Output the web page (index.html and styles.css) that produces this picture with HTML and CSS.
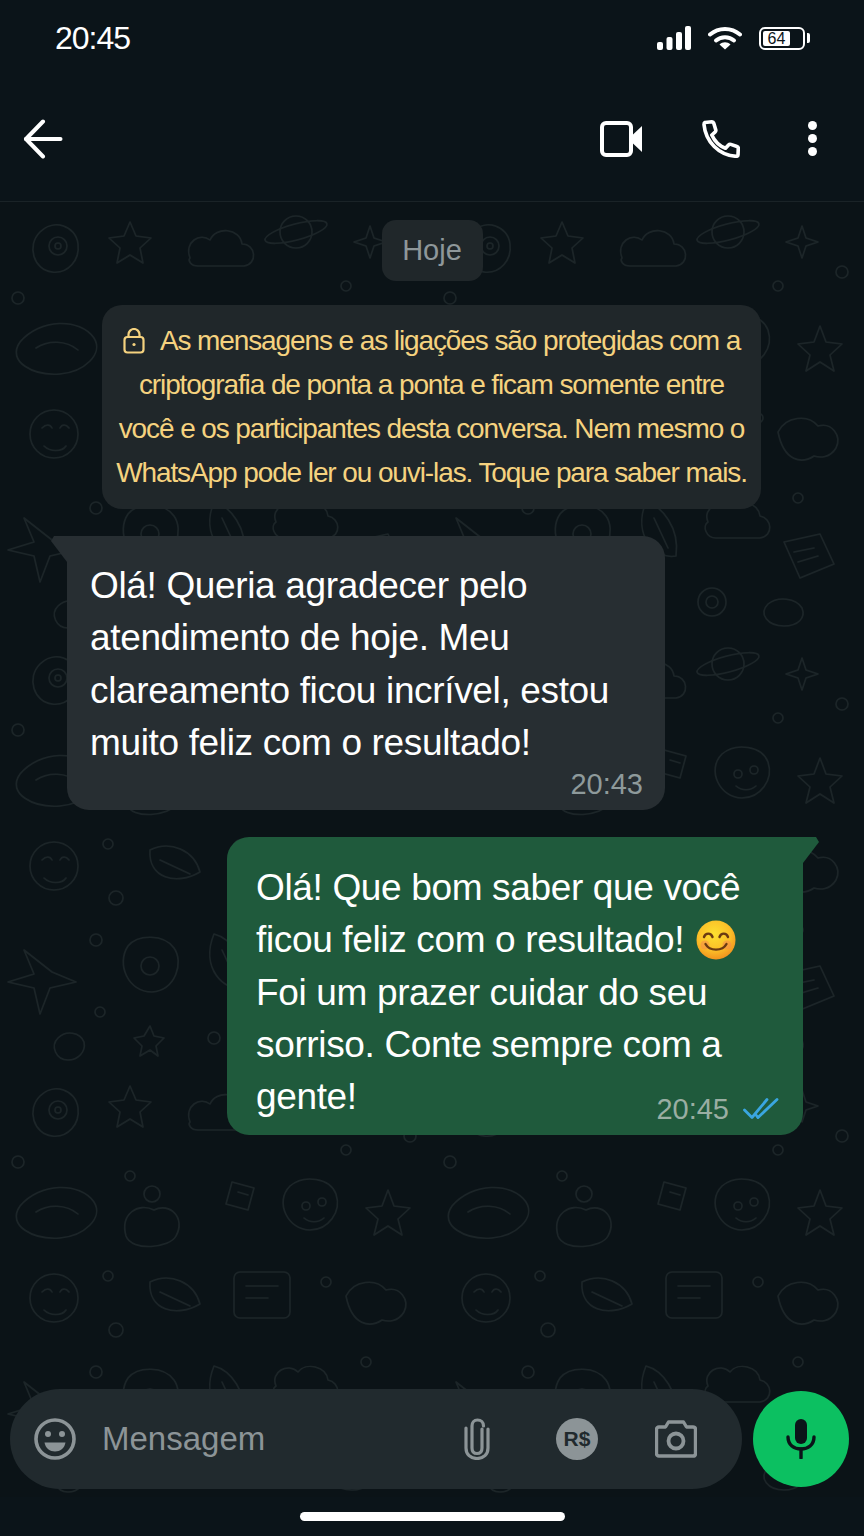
FILE: index.html

```html
<!DOCTYPE html>
<html lang="pt-BR">
<head>
    <meta charset="UTF-8">
    <meta name="viewport" content="width=device-width, initial-scale=1.0">
    <title>Conversa</title>
    <link rel="stylesheet" href="styles.css">
</head>
<body>
    <div class="phone">
        <div class="statusbar">
            <span class="clock">20:45</span>
            <div class="status-icons">
                <svg class="ico-signal" viewBox="0 0 34 24" width="34" height="24">
                    <rect x="0" y="16" width="6" height="8" rx="2" fill="#fff"/>
                    <rect x="9.5" y="11" width="6" height="13" rx="2" fill="#fff"/>
                    <rect x="19" y="6" width="6" height="18" rx="2" fill="#fff"/>
                    <rect x="28" y="0" width="6" height="24" rx="2" fill="#fff"/>
                </svg>
                <svg class="ico-wifi" viewBox="0 0 34 24" width="34" height="24" fill="none" stroke="#fff" stroke-width="4" stroke-linecap="round">
                    <path d="M2 8.5C10.500 1 23.500 1 32 8.500"/>
                    <path d="M8 14.500C13 10 21 10 26 14.500"/>
                    <path d="M17 23.500 L11.500 18.500C14.500 15.500 19.500 15.500 22.500 18.500Z" fill="#fff" stroke="none"/>
                </svg>
                <div class="battery">
                    <div class="battery-body"><span class="battery-level">64</span></div>
                    <div class="battery-cap"></div>
                </div>
            </div>
        </div>

        <div class="toolbar">
            <svg viewBox="0 0 40 40" width="40" height="40" fill="none" stroke="#fff" stroke-width="4" stroke-linecap="round" stroke-linejoin="round">
                <path d="M20 2.500L3 20L20 37.500"/>
                <path d="M3 20H37.500"/>
            </svg>
            <div class="toolbar-actions">
                <svg class="ico-video" viewBox="0 0 42 36" width="42" height="36">
                    <rect x="2" y="2" width="29" height="32" rx="4" fill="none" stroke="#fff" stroke-width="4"/>
                    <path d="M33 13.500L42 5V31L33 22.500Z" fill="#fff"/>
                </svg>
                <svg class="ico-phone" viewBox="0 0 38 38" width="38" height="38" fill="none" stroke="#fff" stroke-width="3.600" stroke-linejoin="round">
                    <path d="M3 2.500L10 1.800C11 1.800 11.500 2.300 11.700 3L13.800 10C14 11 13.800 11.500 13 12.200L9.800 15C12.500 21 17.500 26 23.500 28.300L26.500 25C27.200 24.300 27.800 24.100 28.800 24.400L35 26.500C36 26.800 36.300 27.300 36.300 28.300L36 35C36 36 35.300 36.300 34.300 36.300C17 35.500 3.500 21.500 2 4.500C2 3.300 2.300 2.800 3 2.500Z"/>
                </svg>
                <div class="dots"><i></i><i></i><i></i></div>
            </div>
        </div>

        <div class="chat">
            <!-- doodle wallpaper, tiled behind the messages -->
            <svg class="wallpaper" width="864" height="1296">
                <defs>
                    <pattern id="doodles" width="432" height="432" patternUnits="userSpaceOnUse">
                        <g fill="none" stroke="#1c2528" stroke-width="1.600" stroke-linecap="round" stroke-linejoin="round">
                            <path d="M40 30c14-14 36-6 38 12 2 16-10 30-26 28-18-2-26-26-12-40z"/>
                            <circle cx="58" cy="44" r="9"/><circle cx="58" cy="44" r="3"/>
                            <path d="M130 20l6 14 15 2-11 10 3 15-13-8-13 8 3-15-11-10 15-2z"/>
                            <path d="M190 56c-6-16 10-26 20-18 6-14 30-12 32 4 14 0 16 20 2 22h-46c-8 0-10-6-8-8z"/>
                            <circle cx="296" cy="30" r="16"/><ellipse cx="296" cy="30" rx="32" ry="8" transform="rotate(-15 296 30)"/>
                            <path d="M370 24l4 12 12 4-12 4-4 12-4-12-12-4 12-4z"/>
                            <circle cx="410" cy="70" r="6"/><circle cx="346" cy="84" r="5"/><circle cx="18" cy="96" r="6"/>
                            <path d="M20 140c20-24 60-24 74-4 10 16-10 34-34 36-26 2-54-12-40-32z"/>
                            <path d="M36 146c12-8 30-8 42 2"/>
                            <circle cx="130" cy="110" r="5"/><circle cx="152" cy="128" r="8"/>
                            <path d="M126 170c-6-22 12-34 28-26 16-8 32 8 22 26-6 12-44 16-50 0z"/>
                            <path d="M232 116l22 6-6 22-22-6z"/><path d="M238 126l10 3"/>
                            <path d="M290 120c14-12 40-8 46 8 6 18-8 36-26 36-22 0-36-28-20-44z"/>
                            <circle cx="306" cy="140" r="4"/><circle cx="322" cy="136" r="4"/><path d="M304 152c6 5 14 5 20 0"/>
                            <path d="M388 124l6 16 16 2-12 11 4 16-14-9-14 9 4-16-12-11 16-2z"/>
                            <path d="M30 232a24 24 0 1 0 48 0a24 24 0 1 0-48 0z"/><path d="M42 226c4-4 8-4 10 0M60 226c2-4 6-4 9 0M44 244c6 6 18 6 22 0"/>
                            <circle cx="108" cy="210" r="5"/><circle cx="116" cy="264" r="7"/>
                            <path d="M150 216c20-10 44 0 50 22-24 14-52 6-50-22z"/><path d="M160 226l30 14"/>
                            <path d="M240 206h44a6 6 0 0 1 6 6v34a6 6 0 0 1-6 6h-44a6 6 0 0 1-6-6v-34a6 6 0 0 1 6-6zM246 220h32M246 232h22"/>
                            <circle cx="326" cy="216" r="5"/>
                            <path d="M346 230c8-16 30-18 40-6 14-4 24 10 18 22-6 10-16 10-22 8-12 8-30 6-36-24z"/>
                            <path d="M24 316l10 24-26 8 26 6 6 26 10-26 26-6-24-10z"/>
                            <circle cx="96" cy="306" r="6"/><circle cx="100" cy="378" r="5"/>
                            <path d="M128 312c10-12 36-12 46 2 10 14 2 42-22 44-24 0-36-28-24-46z"/><circle cx="150" cy="332" r="9"/>
                            <path d="M214 300c16 4 34 26 30 54-20 4-44-20-30-54z"/><path d="M222 316l14 30"/>
                            <path d="M276 320c-6-14 12-24 22-14 8-10 28-6 30 8 12 2 14 20 0 22h-44c-10 0-14-12-8-16z"/>
                            <circle cx="366" cy="296" r="5"/>
                            <path d="M352 340l36-8 14 30-34 14z"/><path d="M362 350l20-4M366 360l20-6"/>
                            <path d="M58 404c8-8 22-6 26 4 2 10-6 18-16 18-12 0-18-14-10-22z"/>
                            <path d="M150 392l4 10 10 2-8 8 2 10-8-6-10 6 2-10-8-8 10-2z"/>
                            <circle cx="214" cy="404" r="6"/><circle cx="280" cy="400" r="14"/><circle cx="280" cy="400" r="6"/>
                            <path d="M336 402c10-8 28-6 34 4 4 10-4 18-18 18-16 0-26-12-16-22z"/>
                        </g>
                    </pattern>
                </defs>
                <rect width="864" height="1296" fill="url(#doodles)"/>
            </svg>

            <div class="date-chip">Hoje</div>

            <div class="notice">
                <div><svg class="ico-lock" viewBox="0 0 22 26" width="22" height="26" fill="none" stroke="#f5d27f" stroke-width="2.200"><rect x="1.500" y="9" width="19" height="15.500" rx="3"/><path d="M5.500 9V6.500a5.500 5.500 0 0 1 11 0V9"/><circle cx="11" cy="16.500" r="1.600" fill="#f5d27f" stroke="none"/></svg>As mensagens e as ligações são protegidas com a</div>
                <div>criptografia de ponta a ponta e ficam somente entre</div>
                <div>você e os participantes desta conversa. Nem mesmo o</div>
                <div>WhatsApp pode ler ou ouvi-las. Toque para saber mais.</div>
            </div>

            <div class="bubble bubble-in">
                <div class="bubble-text">Olá! Queria agradecer pelo<br>atendimento de hoje. Meu<br>clareamento ficou incrível, estou<br>muito feliz com o resultado!</div>
                <div class="meta"><span>20:43</span></div>
            </div>

            <div class="bubble bubble-out">
                <div class="bubble-text">Olá! Que bom saber que você<br>ficou feliz com o resultado! <svg class="emoji" viewBox="0 0 40 40" width="40" height="40">
                    <defs><radialGradient id="face" cx="45%" cy="35%" r="70%"><stop offset="0" stop-color="#fde030"/><stop offset="0.600" stop-color="#fbbe28"/><stop offset="1" stop-color="#f08a1c"/></radialGradient></defs>
                    <circle cx="20" cy="20" r="19.500" fill="url(#face)"/>
                    <circle cx="9" cy="25" r="4.500" fill="#f58a4a" opacity="0.550"/><circle cx="31" cy="25" r="4.500" fill="#f58a4a" opacity="0.550"/>
                    <g fill="none" stroke="#6b3a12" stroke-width="2.400" stroke-linecap="round"><path d="M8 17c1.500-4.500 7-4.500 8.500 0"/><path d="M23.500 17c1.500-4.500 7-4.500 8.500 0"/><path d="M9.500 24c4 7.500 17 7.500 21 0"/></g>
                </svg><br>Foi um prazer cuidar do seu<br>sorriso. Conte sempre com a<br>gente!</div>
                <div class="meta meta-out">
                    <span>20:45</span>
                    <svg viewBox="0 0 36 24" width="36" height="24" fill="none" stroke="#3aa6e0" stroke-width="2.800" stroke-linecap="round" stroke-linejoin="round">
                        <path d="M1.500 13L9 20.500L24 2.500"/>
                        <path d="M15 20.500L34 2.500"/>
                        <path d="M13 18L15 20.500"/>
                    </svg>
                </div>
            </div>

            <div class="composer">
                <div class="input-bar">
                    <svg class="ico-smile" viewBox="0 0 42 42" width="42" height="42">
                        <circle cx="21" cy="21" r="19" fill="none" stroke="#8c9497" stroke-width="3.600"/>
                        <circle cx="14" cy="16" r="3" fill="#8c9497"/><circle cx="28" cy="16" r="3" fill="#8c9497"/>
                        <path d="M10.500 24.500H31.500C30.500 30.500 26 33.500 21 33.500S11.500 30.500 10.500 24.500Z" fill="#8c9497"/>
                    </svg>
                    <span class="placeholder">Mensagem</span>
                    <svg class="ico-clip" viewBox="0 0 26 42" width="26" height="42" fill="none" stroke="#8c9497" stroke-width="3.200" stroke-linecap="round">
                        <path d="M18 11V30C18 33.500 16 35.500 13 35.500S8 33.500 8 30V8C8 4.500 10 2 13.500 2S19.500 4.500 19.500 8"/>
                        <path d="M24 11V30C24 36.500 19.500 40.500 13 40.500S2 36.500 2 30V10"/>
                    </svg>
                    <div class="pay-icon">R$</div>
                    <svg class="ico-camera" viewBox="0 0 42 38" width="42" height="38">
                        <path d="M13.500 2H28.500L31.500 7H38C39.500 7 40.500 8 40.500 9.500V33.500C40.500 35 39.500 36 38 36H4C2.500 36 1.500 35 1.500 33.500V9.500C1.500 8 2.500 7 4 7H10.500Z" fill="none" stroke="#8c9497" stroke-width="3.400" stroke-linejoin="round"/>
                        <circle cx="21" cy="21" r="7.500" fill="none" stroke="#8c9497" stroke-width="3.800"/>
                    </svg>
                </div>
                <div class="mic-button">
                    <svg viewBox="0 0 32 40" width="32" height="40" fill="none" stroke="#0b1419" stroke-width="3.400" stroke-linecap="round">
                        <rect x="10" y="0" width="12" height="25" rx="6" fill="#0b1419" stroke="none"/>
                        <path d="M3 18C3 26 9 30 16 30S29 26 29 18"/>
                        <path d="M16 30V39"/>
                    </svg>
                </div>
            </div>
        </div>

        <div class="navbar"><div class="home-bar"></div></div>
    </div>
</body>
</html>
```

FILE: styles.css

```css
* {
    box-sizing: border-box;
}

body {
    margin: 0;
    padding: 0;
    background-color: #0b1419;
    font-family: "Liberation Sans", Arial, sans-serif;
}

.phone {
    width: 864px;
    height: 1536px;
    display: flex;
    flex-direction: column;
    overflow: hidden;
    background-color: #0b1419;
}

/* top bars */
.statusbar {
    height: 76px;
    padding: 0 54px 0 55px;
    display: flex;
    justify-content: space-between;
    align-items: center;
}

.clock {
    color: #ffffff;
    font-size: 32px;
    letter-spacing: -1px;
}

.status-icons {
    display: flex;
    align-items: center;
    gap: 17px;
}

.battery {
    display: flex;
    align-items: center;
    gap: 2px;
}

.battery-body {
    width: 46px;
    height: 23px;
    padding: 2px;
    border: 2px solid #ffffff;
    border-radius: 6px;
}

.battery-level {
    display: block;
    width: 27px;
    height: 15px;
    background-color: #ffffff;
    border-radius: 2px;
    color: #0b1419;
    font-size: 16px;
    line-height: 15px;
    text-align: center;
}

.battery-cap {
    width: 3px;
    height: 10px;
    background-color: #ffffff;
    border-radius: 0 2px 2px 0;
}

.toolbar {
    height: 126px;
    padding: 0 47px 0 23px;
    display: flex;
    justify-content: space-between;
    align-items: center;
    border-bottom: 1px solid #1a2327;
}

.toolbar-actions {
    display: flex;
    align-items: center;
}

.ico-phone {
    margin-left: 60px;
}

.dots {
    margin-left: 68px;
    display: flex;
    flex-direction: column;
    gap: 4px;
}

.dots i {
    display: block;
    width: 9px;
    height: 9px;
    border-radius: 50%;
    background-color: #ffffff;
}

/* messages */
.chat {
    position: relative;
    height: 1295px;
    flex-shrink: 0;
    padding-top: 18px;
    display: flex;
    flex-direction: column;
    background-color: #0b1317;
}

.wallpaper {
    position: absolute;
    top: 0;
    left: 0;
}

.date-chip,
.notice,
.bubble,
.composer {
    position: relative;
}

.date-chip {
    align-self: center;
    width: 101px;
    height: 61px;
    border-radius: 14px;
    background-color: #20272a;
    color: #8e979a;
    font-size: 29px;
    line-height: 61px;
    text-align: center;
}

.notice {
    width: 659px;
    height: 204px;
    margin: 24px 0 0 102px;
    padding-top: 14px;
    border-radius: 20px;
    background-color: #20272a;
    color: #f5d27f;
    font-size: 28px;
    letter-spacing: -1.1px;
    line-height: 44px;
    text-align: center;
}

.ico-lock {
    margin-right: 15px;
    vertical-align: -4px;
}

.bubble {
    color: #ffffff;
    font-size: 37px;
    line-height: 52.300px;
}

.bubble::before {
    content: "";
    position: absolute;
    top: 0;
    width: 22px;
    height: 26px;
}

.bubble-in {
    width: 598px;
    height: 274px;
    margin: 27px 0 0 67px;
    padding: 24px 0 0 23px;
    border-radius: 0 22px 22px 22px;
    background-color: #272e32;
}

.bubble-in::before {
    left: -16px;
    background-color: #272e32;
    clip-path: polygon(3px 0, 100% 0, 100% 100%, 16px 100%, 0 5px);
}

.bubble-out {
    width: 576px;
    height: 298px;
    margin: 27px 0 0 227px;
    padding: 25px 0 0 29px;
    border-radius: 22px 0 22px 22px;
    background-color: #1f5a3c;
}

.bubble-out::before {
    right: -16px;
    background-color: #1f5a3c;
    clip-path: polygon(0 0, calc(100% - 3px) 0, 100% 5px, 6px 100%, 0 100%);
}

.bubble-text {
    letter-spacing: -0.35px;
    white-space: nowrap;
}

.emoji {
    vertical-align: -8px;
    margin-left: 2px;
}

.meta {
    position: absolute;
    right: 22px;
    bottom: 8px;
    display: flex;
    align-items: center;
    gap: 14px;
    color: #8e9a9b;
    font-size: 29px;
    line-height: 36px;
}

.meta-out {
    right: 24px;
    color: #9aaea3;
}

/* message box */
.composer {
    margin-top: auto;
    padding: 0 15px 8px 10px;
    display: flex;
    align-items: center;
    justify-content: space-between;
}

.input-bar {
    width: 732px;
    height: 100px;
    padding: 0 45px 0 24px;
    display: flex;
    align-items: center;
    border-radius: 50px;
    background-color: #212a2e;
}

.placeholder {
    margin-left: 26px;
    width: 362px;
    color: #8c9497;
    font-size: 33px;
}

.pay-icon {
    width: 42px;
    height: 42px;
    margin-left: 66px;
    border-radius: 50%;
    background-color: #8c9497;
    color: #212a2e;
    font-size: 21px;
    font-weight: bold;
    line-height: 42px;
    text-align: center;
}

.ico-camera {
    margin-left: 57px;
}

.mic-button {
    width: 96px;
    height: 96px;
    border-radius: 50%;
    background-color: #0cc061;
    display: flex;
    align-items: center;
    justify-content: center;
}

.navbar {
    flex: 1;
    display: flex;
    justify-content: center;
    padding-top: 15px;
}

.home-bar {
    width: 265px;
    height: 9px;
    border-radius: 5px;
    background-color: #ffffff;
}
```
